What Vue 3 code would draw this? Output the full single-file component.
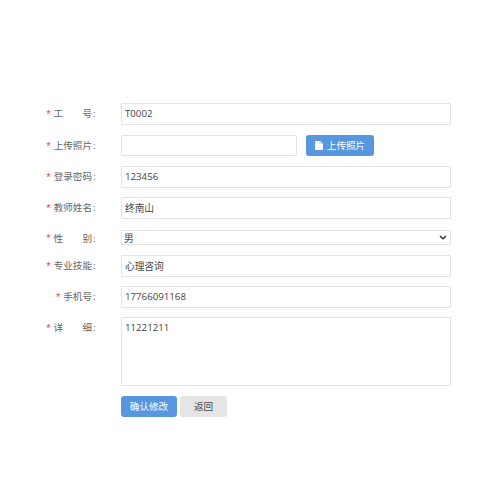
<template>
  <form class="teacher-form" @submit.prevent>
    <div v-for="item in fields" :key="item.key" class="row" :class="'row-' + item.type">
      <label class="label" :for="item.key">
        <span class="star">*</span>
        <span class="label-text">
          <span v-for="part in item.label" :key="part">{{ part }}</span>
        </span>
        <span class="colon">:</span>
      </label>

      <!-- 照片上传 -->
      <template v-if="item.type === 'upload'">
        <input :id="item.key" v-model="form[item.key]" class="control photo" type="text" />
        <button class="btn btn-primary btn-upload" type="button">
          <svg class="icon-file" viewBox="0 0 8 9">
            <path d="M1 0H4.8V3H8V8.2Q8 9 7.2 9H0.8Q0 9 0 8.2V0.8Q0 0 1 0Z" />
            <path d="M5.2 0L8 2.7H5.2Z" />
          </svg>
          <span>上传照片</span>
        </button>
      </template>

      <!-- 性别 -->
      <div v-else-if="item.type === 'select'" class="select-box">
        <select :id="item.key" v-model="form[item.key]" class="control">
          <option>男</option>
          <option>女</option>
        </select>
        <svg class="arrow" viewBox="0 0 8 5">
          <path d="M1 1L4 3.8L7 1" />
        </svg>
      </div>

      <textarea v-else-if="item.type === 'textarea'" :id="item.key" v-model="form[item.key]" class="control" />
      <input v-else :id="item.key" v-model="form[item.key]" class="control" type="text" />
    </div>

    <div class="actions">
      <button class="btn btn-primary btn-submit" type="submit">确认修改</button>
      <button class="btn btn-back" type="button">返回</button>
    </div>
  </form>
</template>

<script setup>
import { reactive } from 'vue'

// label 为数组，两个字的标签两端对齐
const fields = [
  { key: 'number', label: ['工', '号'], type: 'text' },
  { key: 'photo', label: ['上传照片'], type: 'upload' },
  { key: 'password', label: ['登录密码'], type: 'text' },
  { key: 'name', label: ['教师姓名'], type: 'text' },
  { key: 'sex', label: ['性', '别'], type: 'select' },
  { key: 'skill', label: ['专业技能'], type: 'text' },
  { key: 'phone', label: ['手机号'], type: 'text' },
  { key: 'detail', label: ['详', '细'], type: 'textarea' }
]

const form = reactive({
  number: 'T0002',
  photo: '',
  password: '123456',
  name: '终南山',
  sex: '男',
  skill: '心理咨询',
  phone: '17766091168',
  detail: '11221211'
})
</script>

<style>
body { background: #fff; }
</style>

<style scoped>
.teacher-form {
  box-sizing: border-box;
  width: 500px;
  height: 500px;
  padding: 103px 49px 0 40px;
  font-family: "Open Sans", "Noto Sans CJK SC", sans-serif;
  font-size: 9.6px;
  color: #444;
}
.row { display: flex; height: 22px; margin-bottom: 9px; }
.row-upload { height: 21px; margin: 10px 0; }
.row-select { height: 15px; margin: 11px 0 10px; }
.row-textarea { height: 69px; margin-bottom: 10px; }

/* 标签 */
.label { display: flex; justify-content: flex-end; width: 56px; height: 22px; margin-right: 25px; line-height: 22px; color: #666; flex: none; }
.row-select .label { height: 15px; line-height: 17px; }
.star { margin-right: 3px; font-family: "Liberation Sans", sans-serif; font-size: 11px; color: #e8484f; }
.label-text { display: flex; justify-content: space-between; }
.label-text:has(span + span) { width: 38.4px; }
.colon { width: 3px; margin-left: 1px; }

/* 输入控件 */
.control {
  box-sizing: border-box;
  flex: 1;
  width: 100%;
  min-width: 0;
  height: 100%;
  margin: 0;
  padding: 0 3px 1px;
  border: 1px solid #e3e3e3;
  border-radius: 1px;
  outline: none;
  background: #fff;
  font: inherit;
  font-size: 9.7px;
  color: #444;
}
.control.photo { flex: none; width: 176px; border-radius: 2px; }
textarea.control { padding-top: 3px; line-height: 14px; resize: none; }
.select-box { position: relative; flex: 1; }
.select-box .control { display: block; padding: 1px 2px 0; appearance: none; }
.arrow { position: absolute; top: 5px; right: 4px; width: 8px; height: 5px; fill: none; stroke: #333; stroke-width: 1.5; }

/* 按钮 */
.btn { display: flex; align-items: center; justify-content: center; height: 21px; padding: 0 0 1px; border: 0; border-radius: 3px; font: inherit; }
.btn-primary { background: #5797df; color: #fff; }
.btn-upload { width: 68px; margin-left: 9px; }
.icon-file { width: 8px; height: 9px; margin-right: 4px; fill: #fff; }
.actions { display: flex; gap: 3px; padding-left: 81px; }
.btn-submit { width: 56px; }
.btn-back { width: 47px; background: #e5e5e5; color: #444; }
</style>
